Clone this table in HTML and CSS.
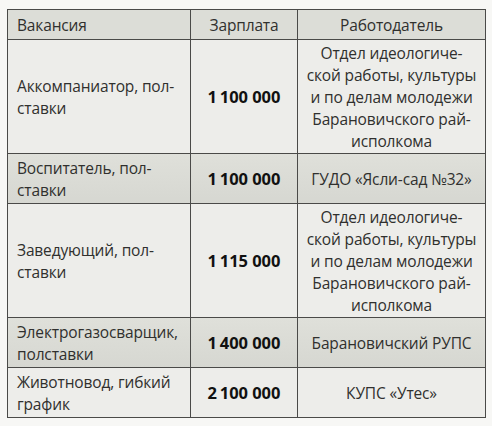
FILE: index.html
```html
<!DOCTYPE html>
<html lang="ru">
<head>
<meta charset="utf-8">
<link rel="stylesheet" href="styles.css">
</head>
<body>
<table class="jobs">
  <colgroup>
    <col class="c-job">
    <col class="c-pay">
    <col class="c-emp">
  </colgroup>
  <thead>
    <tr class="head">
      <th class="job">Вакансия</th>
      <th>Зарплата</th>
      <th>Работодатель</th>
    </tr>
  </thead>
  <tbody>
    <tr class="tall">
      <td class="job">Аккомпаниатор, пол-<br>ставки</td>
      <td class="pay">1&#8201;100&#8197;000</td>
      <td class="emp">Отдел идеологиче-<br>ской работы, культуры<br>и по делам молодежи<br>Барановичского рай-<br>исполкома</td>
    </tr>
    <tr class="short alt">
      <td class="job">Воспитатель, пол-<br>ставки</td>
      <td class="pay">1&#8201;100&#8197;000</td>
      <td class="emp">ГУДО «Ясли-сад №32»</td>
    </tr>
    <tr class="tall">
      <td class="job">Заведующий, пол-<br>ставки</td>
      <td class="pay">1&#8201;115&#8197;000</td>
      <td class="emp">Отдел идеологиче-<br>ской работы, культуры<br>и по делам молодежи<br>Барановичского рай-<br>исполкома</td>
    </tr>
    <tr class="short alt">
      <td class="job">Электрогазосварщик,<br>полставки</td>
      <td class="pay">1&#8201;400&#8197;000</td>
      <td class="emp">Барановичский РУПС</td>
    </tr>
    <tr class="short">
      <td class="job">Животновод, гибкий<br>график</td>
      <td class="pay">2&#8201;100&#8197;000</td>
      <td class="emp">КУПС «Утес»</td>
    </tr>
  </tbody>
</table>
</body>
</html>
```

FILE: styles.css
```css
html, body {
  margin: 0;
  padding: 0;
  background: #f7f7f5;
}

body {
  padding: 9px 7px 0 7px;
  font-family: "Open Sans", "Noto Sans", "DejaVu Sans", sans-serif;
  font-size: 15.5px;
  letter-spacing: -0.15px;
  color: #30302e;
}

.jobs {
  border-collapse: collapse;
  table-layout: fixed;
  width: 478px;
  background: #ededea;
  border: 1.5px solid #4a4a48;
}

.c-job { width: 183px; }
.c-pay { width: 107px; }
.c-emp { width: 188px; }

.jobs th,
.jobs td {
  border: 1px solid #4a4a48;
  padding: 0 2px;
  line-height: 22px;
  text-align: center;
  vertical-align: middle;
  font-weight: 400;
  white-space: nowrap;
}

.jobs .job {
  text-align: left;
  padding-left: 9px;
}

.head {
  height: 30px;
  background: #dcddd7;
}

.tall { height: 114px; }
.short { height: 50px; }

.alt {
  background: linear-gradient(#dfe0da, #d6d7d1);
}

.jobs .pay {
  font-weight: 700;
  font-size: 16.5px;
  letter-spacing: 0;
  color: #111;
}
```
